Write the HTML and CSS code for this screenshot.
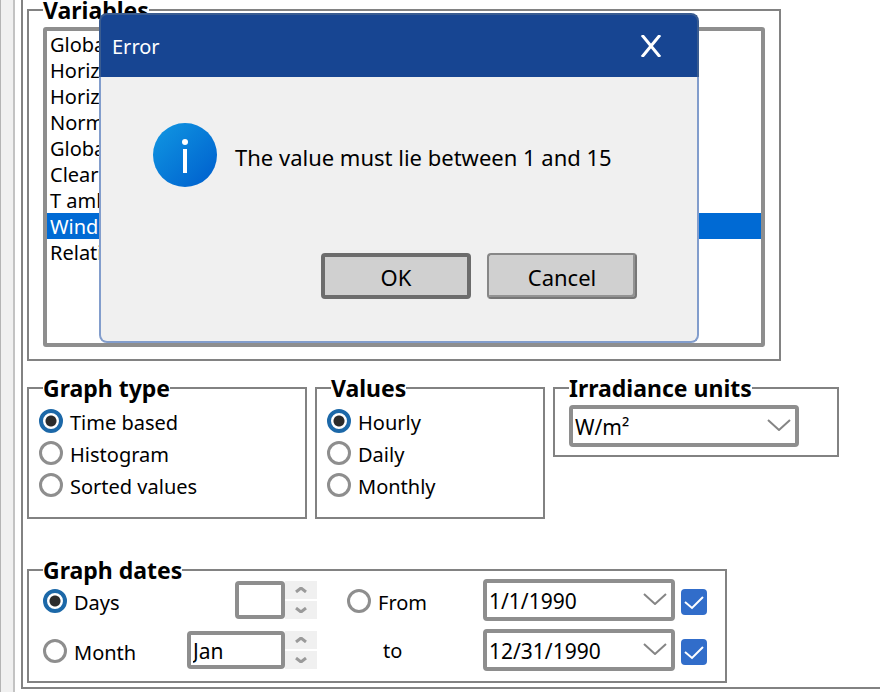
FILE: index.html
```html
<!DOCTYPE html>
<html lang="en">
<head>
<meta charset="utf-8">
<title>Error</title>
<link rel="stylesheet" href="styles.css">
</head>
<body>
<div class="window">
  <div class="gutter"></div>
  <main class="panel">
    <fieldset class="group variables">
      <legend>Variables</legend>
      <select class="listbox" size="12" aria-label="Variables">
        <option>Global</option>
        <option>Horizon</option>
        <option>Horizon</option>
        <option>Normal</option>
        <option>Global</option>
        <option>Clear</option>
        <option>T amb</option>
        <option selected>Wind</option>
        <option>Relative</option>
      </select>
    </fieldset>

    <div class="row">
      <fieldset class="group graph-type">
        <legend>Graph type</legend>
        <label class="choice"><input type="radio" name="type" checked><span>Time based</span></label>
        <label class="choice"><input type="radio" name="type"><span>Histogram</span></label>
        <label class="choice"><input type="radio" name="type"><span>Sorted values</span></label>
      </fieldset>
      <fieldset class="group values">
        <legend>Values</legend>
        <label class="choice"><input type="radio" name="values" checked><span>Hourly</span></label>
        <label class="choice"><input type="radio" name="values"><span>Daily</span></label>
        <label class="choice"><input type="radio" name="values"><span>Monthly</span></label>
      </fieldset>
      <fieldset class="group units">
        <legend>Irradiance units</legend>
        <div class="combo">
          <select aria-label="Irradiance units"><option>W/m²</option></select>
          <svg viewBox="0 0 24 12" aria-hidden="true"><path d="M1 1l11 10L23 1"/></svg>
        </div>
      </fieldset>
    </div>

    <fieldset class="group dates">
      <legend>Graph dates</legend>
      <div class="date-grid">
        <label class="choice"><input type="radio" name="range" checked><span>Days</span></label>
        <div class="spin">
          <input class="short" type="text" aria-label="Days">
          <div class="arrows">
            <button type="button" aria-label="More days"><svg viewBox="0 0 12 6"><path d="M1 5l5-4 5 4"/></svg></button>
            <button type="button" aria-label="Fewer days"><svg viewBox="0 0 12 6"><path d="M1 1l5 4 5-4"/></svg></button>
          </div>
        </div>
        <label class="choice"><input type="radio" name="range"><span>From</span></label>
        <div class="combo">
          <select aria-label="From"><option>1/1/1990</option></select>
          <svg viewBox="0 0 24 12" aria-hidden="true"><path d="M1 1l11 10L23 1"/></svg>
        </div>
        <div class="check">
          <input type="checkbox" aria-label="Use start date" checked>
          <svg viewBox="0 0 26 26" aria-hidden="true"><path d="M4 13l7 6L22 8"/></svg>
        </div>

        <label class="choice"><input type="radio" name="range"><span>Month</span></label>
        <div class="spin">
          <input type="text" value="Jan" aria-label="Month">
          <div class="arrows">
            <button type="button" aria-label="Next month"><svg viewBox="0 0 12 6"><path d="M1 5l5-4 5 4"/></svg></button>
            <button type="button" aria-label="Previous month"><svg viewBox="0 0 12 6"><path d="M1 1l5 4 5-4"/></svg></button>
          </div>
        </div>
        <label class="to" for="end">to</label>
        <div class="combo">
          <select id="end"><option>12/31/1990</option></select>
          <svg viewBox="0 0 24 12" aria-hidden="true"><path d="M1 1l11 10L23 1"/></svg>
        </div>
        <div class="check">
          <input type="checkbox" aria-label="Use end date" checked>
          <svg viewBox="0 0 26 26" aria-hidden="true"><path d="M4 13l7 6L22 8"/></svg>
        </div>
      </div>
    </fieldset>
  </main>
</div>

<div class="dialog" role="dialog" aria-labelledby="dialog-title">
  <header>
    <span id="dialog-title">Error</span>
    <button type="button" class="close" aria-label="Close"><svg viewBox="0 0 22 22"><path d="M2 0L20 22M20 0L2 22"/></svg></button>
  </header>
  <div class="dialog-body">
    <div class="message">
      <svg class="info" viewBox="0 0 64 64" aria-hidden="true">
        <defs><linearGradient id="blue" x1="0" y1="0" x2="1" y2="1"><stop offset="0.1" stop-color="#0f92e0"/><stop offset="0.9" stop-color="#0063cf"/></linearGradient></defs>
        <circle cx="32" cy="32" r="32" fill="url(#blue)"/>
        <circle cx="32" cy="19" r="3" fill="#fff"/>
        <rect x="30" y="26" width="4" height="24" fill="#fff"/>
      </svg>
      <p>The value must lie between 1 and 15</p>
    </div>
    <div class="actions">
      <button type="button" class="default">OK</button>
      <button type="button" class="plain">Cancel</button>
    </div>
  </div>
</div>
</body>
</html>
```
FILE: styles.css
```css
* { box-sizing: border-box; }

body {
  margin: 0;
  background: #fff;
  color: #000;
  font: 20px/26px "Noto Sans", "Open Sans", sans-serif;
}

input, select, button { font: inherit; color: inherit; margin: 0; }

.window { display: flex; padding-bottom: 3px; background: #fff; }

.gutter {
  flex: none;
  width: 15px;
  margin: 0 6px -3px 0;
  background: #f0f0f0;
  border-left: 1px solid #b4b4b4;
  border-right: 2px solid #c3c3c3;
}

.panel {
  flex: 1;
  min-width: 0;
  padding: 1px 0 4px 4px;
  border-left: 2px solid #828282;
  border-bottom: 2px solid #828282;
}

.group {
  min-width: 0;
  margin: 0;
  padding: 8px 14px;
  border: 2px solid #828282;
}

.group legend {
  padding: 0;
  font-size: 23px;
  font-weight: bold;
  line-height: 18px;
}

.variables { max-width: 754px; padding-bottom: 12px; }

.listbox {
  display: block;
  width: 100%;
  height: 320px;
  padding: 0;
  border: 4px solid #8e8e8e;
  border-radius: 3px;
  background: #fff;
  outline: none;
  overflow: hidden;
}

.listbox option { height: 26px; min-height: 26px; padding: 0 3px; line-height: 26px; }

.listbox option:checked {
  color: #fff;
  background: #006ad4 linear-gradient(#006ad4, #006ad4);
}

.row { display: flex; align-items: flex-start; gap: 8px; margin-top: 18px; }
.graph-type { width: 280px; }
.values { width: 230px; }
.units { width: 286px; }
.graph-type, .values { padding: 8px 10px 16px; }
.graph-type legend, .values legend { margin-left: 4px; }
.units .combo { width: 230px; }

.choice { display: flex; align-items: center; gap: 7px; height: 32px; }
.choice span { padding-top: 4px; }

.choice input {
  appearance: none;
  flex: none;
  width: 24px;
  height: 24px;
  border: 3px solid #8e8e8e;
  border-radius: 50%;
  background: #fff;
}

.choice input:checked {
  border: 4px solid #1c68a8;
  background: radial-gradient(circle, #2b2b2b 5px, #fff 6px);
}

.combo { position: relative; height: 42px; }

.combo select {
  appearance: none;
  width: 100%;
  height: 100%;
  padding: 2px 32px 0 2px;
  border: 4px solid #8e8e8e;
  border-radius: 4px;
  background: #fff;
  font-size: 21px;
}

.combo svg {
  position: absolute;
  right: 8px;
  top: 14px;
  width: 24px;
  height: 12px;
  pointer-events: none;
}

svg path { fill: none; stroke: #858585; stroke-width: 2; }

.dates { max-width: 700px; margin-top: 42px; padding-top: 0; padding-bottom: 10px; }

.date-grid {
  display: grid;
  grid-template-columns: 144px 160px 136px 198px 26px;
  row-gap: 8px;
  align-items: center;
}

.date-grid .choice { padding-top: 2px; }
.date-grid .combo { width: 192px; }
.to { padding: 2px 0 0 36px; }

.spin { display: flex; justify-self: end; width: 130px; height: 38px; margin-right: 30px; justify-content: flex-end; }

.spin input {
  width: 98px;
  height: 38px;
  padding: 2px 2px 0;
  border: 4px solid #8e8e8e;
  border-radius: 4px;
  background: #fff;
  font-size: 21px;
}

.spin .short { width: 50px; }

.arrows { display: flex; flex-direction: column; gap: 2px; width: 32px; }

.arrows button {
  display: flex;
  flex: 1;
  align-items: center;
  justify-content: center;
  padding: 0;
  border: 0;
  background: #f0f0f0;
}

.arrows svg { width: 12px; height: 6px; }
.arrows path { stroke: #9a9a9a; stroke-width: 3; }

.check { position: relative; height: 26px; margin-top: 4px; }

.check input {
  display: block;
  appearance: none;
  width: 26px;
  height: 26px;
  border-radius: 4px;
  background: #316dca;
}

.check svg { position: absolute; inset: 0; pointer-events: none; }
.check path { stroke: #fff; }

.dialog {
  position: absolute;
  left: 99px;
  top: 13px;
  width: 600px;
  font-size: 22px;
}

.dialog header {
  display: flex;
  align-items: center;
  justify-content: space-between;
  height: 64px;
  padding-left: 11px;
  border: 2px solid #3a5c90;
  border-bottom: 0;
  border-radius: 8px 8px 0 0;
  background: #174592;
  color: #fff;
  font-size: 20px;
}

.dialog header span { padding-top: 2px; }

.close {
  display: flex;
  align-items: center;
  justify-content: center;
  width: 92px;
  height: 62px;
  padding: 0;
  border: 0;
  background: none;
}

.close svg { width: 22px; height: 22px; }
.close path { stroke: #fff; stroke-width: 3; }

.dialog-body {
  padding: 46px 60px 42px 52px;
  border: 2px solid #829dcc;
  border-top: 0;
  border-radius: 0 0 8px 8px;
  background: #f0f0f0;
}

.message { display: flex; align-items: center; gap: 18px; }
.message p { margin: 0; padding-top: 4px; }
.info { flex: none; width: 64px; height: 64px; }

.actions { display: flex; justify-content: flex-end; gap: 16px; margin-top: 66px; }

.actions button {
  width: 150px;
  height: 46px;
  padding: 2px 0 0;
  border-radius: 4px;
  background: #d0d0d0;
}

.default { border: 4px solid #6c6c6c; }

.plain {
  border: 2px solid #878787;
  border-right-color: #777;
  border-bottom-color: #777;
  box-shadow: inset -2px -2px #939393;
}
```
